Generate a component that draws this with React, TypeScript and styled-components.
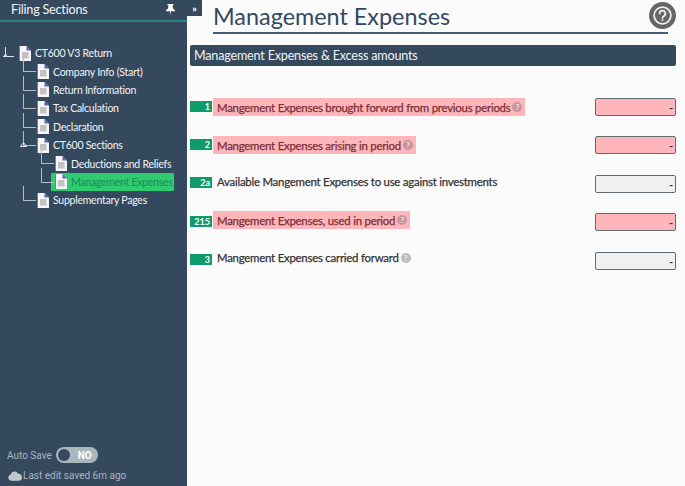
import React from "react";
import styled, { createGlobalStyle } from "styled-components";

const GlobalStyle = createGlobalStyle`
    html, body {
        margin: 0;
        padding: 0;
        background: #fbfbfb;
    }
    body {
        font-family: Lato, "Liberation Sans", sans-serif;
    }
`;

const Page = styled.div`
    display: flex;
    width: 685px;
    height: 486px;
    overflow: hidden;
`;

const Sidebar = styled.aside`
    display: flex;
    flex-direction: column;
    flex: 0 0 187px;
    background: #34495e;
    color: #f2f4f6;
`;

const SidebarHeader = styled.div`
    display: flex;
    align-items: center;
    justify-content: space-between;
    height: 18px;
    padding: 0 12px 2px 11px;
    border-bottom: 2px solid #2f7f80;
    font-size: 12.6px;
    letter-spacing: -0.2px;
`;

const Tree = styled.ul`
    list-style: none;
    margin: 22px 0 0;
    padding: 0;
`;

const TreeRow = styled.li<{ $level: number }>`
    position: relative;
    display: flex;
    align-items: center;
    gap: 3px;
    height: 18.4px;
    padding-left: ${(p) => (p.$level === 0 ? 19 : p.$level === 1 ? 37 : 55)}px;
    font-size: 10.5px;
    letter-spacing: -0.25px;
    white-space: nowrap;

    &::before {
        content: "";
        display: ${(p) => (p.$level === 0 ? "none" : "block")};
        position: absolute;
        left: ${(p) => (p.$level === 1 ? 23 : 41)}px;
        top: -5px;
        width: 12px;
        height: 14px;
        border-left: 1px solid #b4bdc6;
        border-bottom: 1px solid #b4bdc6;
    }
`;

const NodeLabel = styled.span<{ $active?: boolean }>`
    color: ${(p) => (p.$active ? "#1d8a55" : "inherit")};
`;

const ActiveBand = styled.div`
    display: flex;
    align-items: center;
    gap: 3px;
    width: 123px;
    height: 18px;
    margin-left: -4px;
    padding-left: 4px;
    box-sizing: border-box;
    background: #2ecc71;
    border-radius: 1px;
`;

const RootStem = styled.svg`
    position: absolute;
    left: 2px;
    top: 2px;
`;

const Expander = styled.svg`
    position: absolute;
    left: 20px;
    top: 6px;
`;

const SidebarFooter = styled.div`
    display: flex;
    flex-direction: column;
    gap: 7px;
    margin-top: auto;
    padding: 0 0 5px 7px;
    font-family: Roboto, "Liberation Sans", sans-serif;
    font-size: 10px;
    color: #aab4be;
`;

const AutoSave = styled.div`
    display: flex;
    align-items: center;
    gap: 4px;
`;

const Toggle = styled.div`
    display: flex;
    align-items: center;
    width: 42px;
    height: 16px;
    box-sizing: border-box;
    padding: 2px;
    border-radius: 8px;
    background: #aab7bb;
    color: #fff;
    font-size: 10px;
    font-weight: 700;
`;

const ToggleKnob = styled.span`
    width: 12px;
    height: 12px;
    margin-right: 8px;
    border-radius: 50%;
    background: #34495e;
`;

const LastSaved = styled.div`
    display: flex;
    align-items: center;
    gap: 1px;
    padding-left: 1px;
`;

const Main = styled.main`
    position: relative;
    flex: 1;
    display: flex;
    flex-direction: column;
    padding: 0 9px 0 3px;
`;

const TitleRow = styled.div`
    display: flex;
    align-items: flex-start;
`;

const CollapseButton = styled.div`
    display: flex;
    align-items: center;
    justify-content: center;
    width: 15px;
    height: 16px;
    margin-left: -3px;
    background: #34495e;
    color: #fff;
    font-size: 10px;
    font-weight: 700;
    line-height: 1;
`;

const Title = styled.h1`
    box-sizing: border-box;
    width: 455px;
    height: 34px;
    margin: 0 0 0 11px;
    border-bottom: 2px solid #4a5d70;
    color: #34495e;
    font-size: 23.4px;
    font-weight: 400;
    line-height: 33px;
    white-space: nowrap;
`;

const HelpButton = styled.div`
    position: absolute;
    top: 2px;
    right: 9px;
    display: flex;
    align-items: center;
    justify-content: center;
    width: 27px;
    height: 27px;
    border-radius: 50%;
    background: #666;
`;

const SectionBar = styled.h2`
    height: 21px;
    margin: 11px 0 0;
    padding: 0 4px;
    border-radius: 2px;
    background: #34495e;
    color: #f0f3f5;
    font-size: 12.6px;
    font-weight: 400;
    letter-spacing: -0.2px;
    line-height: 21px;
`;

const Rows = styled.div`
    display: flex;
    flex-direction: column;
    gap: 20.4px;
    margin-top: 32px;
`;

const Row = styled.div`
    display: flex;
    align-items: center;
    height: 18px;
`;

const Badge = styled.span`
    flex: 0 0 22px;
    box-sizing: border-box;
    height: 11px;
    margin-bottom: 2px;
    padding-right: 2px;
    background: #0f9b6b;
    color: #fff;
    font-size: 9px;
    font-weight: 700;
    line-height: 11px;
    text-align: right;
`;

const Label = styled.div<{ $error?: boolean; $lift: number }>`
    display: flex;
    align-items: center;
    gap: 2px;
    height: 18px;
    margin: 0 0 ${(p) => p.$lift * 2}px 1px;
    padding: 0 3px 0 4px;
    background: ${(p) => (p.$error ? "#ffb6ba" : "transparent")};
    color: ${(p) => (p.$error ? "#7a3038" : "#333")};
    font-size: 11.4px;
    letter-spacing: -0.23px;
    -webkit-text-stroke: 0.25px currentColor;
    white-space: nowrap;
`;

const HintDot = styled.span<{ $error?: boolean }>`
    display: flex;
    align-items: center;
    justify-content: center;
    width: 10px;
    height: 10px;
    border-radius: 50%;
    background: ${(p) => (p.$error ? "#c9969b" : "#bdbdbd")};
    color: #f5f5f5;
    font-size: 7px;
    font-weight: 700;
    -webkit-text-stroke: 0;
`;

const Amount = styled.div<{ $error?: boolean }>`
    box-sizing: border-box;
    width: 81px;
    height: 18px;
    margin-left: auto;
    padding-right: 2px;
    border: 1px solid #5f6b75;
    border-radius: 2px;
    background: ${(p) => (p.$error ? "#ffb6ba" : "#f0f0f0")};
    color: #333;
    font-size: 11px;
    font-weight: 700;
    line-height: 17px;
    text-align: right;
`;

const FileSvg = styled.svg`
    flex: 0 0 12px;
    margin-right: 1px;
`;

const FileIcon = () => (
    <FileSvg width="12" height="15" viewBox="0 0 12 15">
        <path d="M1 0H7.5L12 4.5V15H1Z" fill="#f5f6fb" />
        <path d="M7.5 0L12 4.5H7.5Z" fill="#5f5fb0" />
        <path d="M0 0H1V15H0Z" fill="#6f78c0" />
        <rect x="3" y="6" width="6.5" height="6.5" fill="#c4c2bd" />
    </FileSvg>
);

const PinIcon = () => (
    <svg width="9" height="11" viewBox="0 0 9 11">
        <path d="M1.5 0H7.5V1.2H6.6L7 4.6L9 6.2V7.2H5L4.5 11L4 7.2H0V6.2L2 4.6L2.4 1.2H1.5Z" fill="#fff" />
    </svg>
);

const CloudIcon = () => (
    <svg width="14" height="10" viewBox="0 0 13 9">
        <path d="M3 9A3 3 0 0 1 2.6 3.1A3.6 3.6 0 0 1 9.3 2.4A3.3 3.3 0 0 1 10 9Z" fill="#c3c8cd" />
    </svg>
);

const HelpIcon = () => (
    <svg width="19" height="19" viewBox="0 0 19 19" fill="none" stroke="#f2f2f2" strokeWidth="1.7">
        <circle cx="9.5" cy="9.5" r="8.4" />
        <path d="M6.6 7.6A2.9 2.9 0 1 1 11 10C10 10.6 9.5 11 9.5 12" strokeLinecap="round" />
        <path d="M9.5 13.4V15" />
    </svg>
);

interface TreeNode {
    label: string;
    level: number;
    active?: boolean;
    expandable?: boolean;
}

const nodes: TreeNode[] = [
    { label: "CT600 V3 Return", level: 0 },
    { label: "Company Info (Start)", level: 1 },
    { label: "Return Information", level: 1 },
    { label: "Tax Calculation", level: 1 },
    { label: "Declaration", level: 1 },
    { label: "CT600 Sections", level: 1, expandable: true },
    { label: "Deductions and Reliefs", level: 2 },
    { label: "Management Expenses", level: 2, active: true },
    { label: "Supplementary Pages", level: 1 },
];

interface ExpenseRow {
    box: string;
    label: string;
    lift: number;
    error?: boolean;
    hint?: boolean;
}

const rows: ExpenseRow[] = [
    { box: "1", label: "Mangement Expenses brought forward from previous periods", lift: 0, error: true, hint: true },
    { box: "2", label: "Mangement Expenses arising in period", lift: 0, error: true, hint: true },
    { box: "2a", label: "Available Mangement Expenses to use against investments", lift: 2.5 },
    { box: "215", label: "Mangement Expenses, used in period", lift: 2, error: true, hint: true },
    { box: "3", label: "Mangement Expenses carried forward", lift: 3, hint: true },
];

const App = () => {
    return (
        <Page>
            <GlobalStyle />
            <Sidebar>
                <SidebarHeader>
                    Filing Sections
                    <PinIcon />
                </SidebarHeader>
                <Tree>
                    {nodes.map((node) => (
                        <TreeRow key={node.label} $level={node.level}>
                            {node.level === 0 && (
                                <RootStem width="13" height="14" viewBox="0 0 13 14" fill="none" stroke="#dfe3e7">
                                    <path d="M3.5 1V10M1 10.5H12" />
                                    <path d="M2 8.5L3.5 10.5L5 8.5" />
                                </RootStem>
                            )}
                            {node.expandable && (
                                <Expander width="7" height="5" viewBox="0 0 7 5">
                                    <path d="M0.5 4.5H6.5L3.5 0.5Z" fill="none" stroke="#e8ebee" />
                                </Expander>
                            )}
                            {node.active ? (
                                <ActiveBand>
                                    <FileIcon />
                                    <NodeLabel $active>{node.label}</NodeLabel>
                                </ActiveBand>
                            ) : (
                                <>
                                    <FileIcon />
                                    <NodeLabel>{node.label}</NodeLabel>
                                </>
                            )}
                        </TreeRow>
                    ))}
                </Tree>
                <SidebarFooter>
                    <AutoSave>
                        Auto Save
                        <Toggle>
                            <ToggleKnob />
                            NO
                        </Toggle>
                    </AutoSave>
                    <LastSaved>
                        <CloudIcon />
                        Last edit saved 6m ago
                    </LastSaved>
                </SidebarFooter>
            </Sidebar>
            <Main>
                <TitleRow>
                    <CollapseButton>»</CollapseButton>
                    <Title>Management Expenses</Title>
                </TitleRow>
                <HelpButton>
                    <HelpIcon />
                </HelpButton>
                <SectionBar>Management Expenses &amp; Excess amounts</SectionBar>
                <Rows>
                    {rows.map((row) => (
                        <Row key={row.box}>
                            <Badge>{row.box}</Badge>
                            <Label $error={row.error} $lift={row.lift}>
                                {row.label}
                                {row.hint && <HintDot $error={row.error}>?</HintDot>}
                            </Label>
                            <Amount $error={row.error}>-</Amount>
                        </Row>
                    ))}
                </Rows>
            </Main>
        </Page>
    );
};

export default App;
